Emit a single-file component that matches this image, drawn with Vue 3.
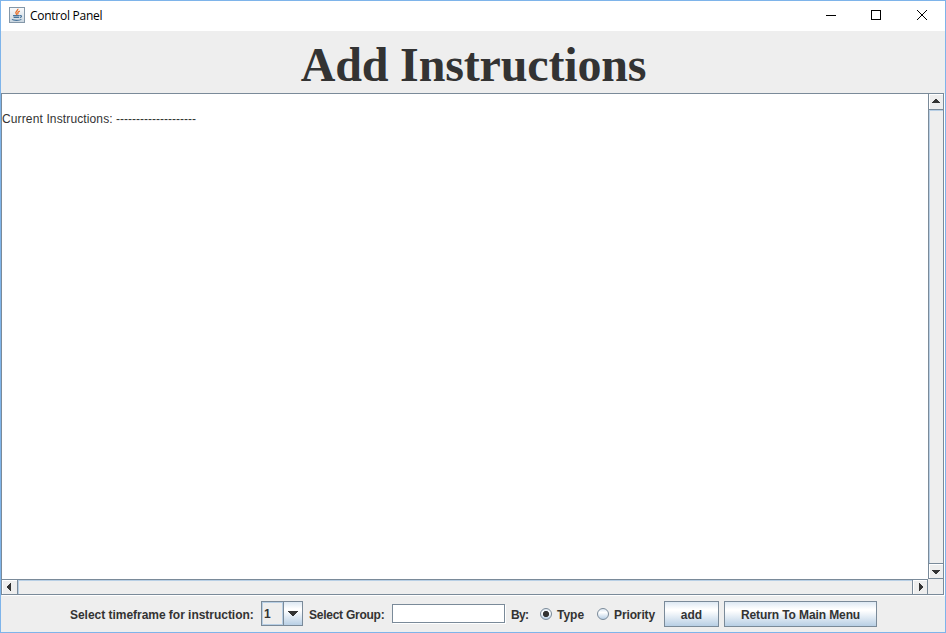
<script setup>
import { ref } from 'vue'

const timeframe = ref('1')
const group = ref('')
const mode = ref('Type')
</script>

<template>
  <div class="window">
    <header class="titlebar">
      <svg class="java" width="16" height="16" viewBox="0 0 16 16">
        <defs>
          <linearGradient id="tile" x1="0" y1="0" x2="0" y2="1">
            <stop offset="0" stop-color="#fafbfc" />
            <stop offset="1" stop-color="#c9d5df" />
          </linearGradient>
        </defs>
        <rect x=".5" y=".5" width="15" height="15" fill="url(#tile)" stroke="#8497a8" />
        <path d="M8.8 1.8C9.6 3.6 5.6 4.6 7 6.4L8 7.8M10.8 4.2C8.6 5 8.4 6 9.2 7.4" fill="none" stroke="#e8702a" stroke-width="1.3" />
        <path d="M4 8.6H10.5M4.6 10.4H10M10.8 8.6C13.4 8.2 12.8 10.2 10.8 10.6M3 12.4C4.5 13.7 10.4 13.6 12.4 12.4" fill="none" stroke="#47749b" stroke-width="1.1" />
      </svg>
      <span class="caption">Control Panel</span>
      <svg class="controls" width="102" height="12" viewBox="0 0 102 12" shape-rendering="crispEdges">
        <path d="M0 6.5H10M45.5 1.5H54.5V10.5H45.5Z" fill="none" stroke="#000" />
        <path d="M91 1L101 11M101 1L91 11" fill="none" stroke="#000" shape-rendering="auto" />
      </svg>
    </header>

    <h1 class="heading"><span>Add Instructions</span></h1>

    <main class="pane">
      <div class="viewport"><p><span class="lead">Current Instructions:</span> --------------------</p></div>
      <div class="vbar">
        <div class="arrow up"><svg width="8" height="4" shape-rendering="crispEdges"><path d="M3 0H5V1H6V2H7V3H8V4H0V3H1V2H2V1H3Z" /></svg></div>
        <div class="track"></div>
        <div class="arrow down"><svg width="8" height="4" shape-rendering="crispEdges"><path d="M0 0H8V1H7V2H6V3H5V4H3V3H2V2H1V1H0Z" /></svg></div>
      </div>
      <div class="hbar">
        <div class="arrow left"><svg width="4" height="8" shape-rendering="crispEdges"><path d="M4 0V8H3V7H2V6H1V5H0V3H1V2H2V1H3V0Z" /></svg></div>
        <div class="track"></div>
        <div class="arrow right"><svg width="4" height="8" shape-rendering="crispEdges"><path d="M0 0V8H1V7H2V6H3V5H4V3H3V2H2V1H1V0Z" /></svg></div>
      </div>
      <div class="corner"></div>
    </main>

    <footer class="form">
      <span class="label timeframe">Select timeframe for instruction:</span>
      <div class="combo">
        <span class="value">{{ timeframe }}</span>
        <span class="drop"><svg width="10" height="5" shape-rendering="crispEdges"><path d="M0 0H10V1H9V2H8V3H7V4H6V5H4V4H3V3H2V2H1V1H0Z" /></svg></span>
      </div>
      <span class="label group">Select Group:</span>
      <input v-model="group" class="field" type="text" />
      <span class="label by">By:</span>
      <label class="radio type"><input v-model="mode" type="radio" value="Type" /><span>Type</span></label>
      <label class="radio priority"><input v-model="mode" type="radio" value="Priority" /><span>Priority</span></label>
      <button class="button add">add</button>
      <button class="button back">Return To Main Menu</button>
    </footer>
  </div>
</template>

<style>
body { margin: 0; overflow: hidden; }
</style>

<style scoped>
.window {
  box-sizing: border-box;
  width: 946px;
  height: 633px;
  border: 1px solid #7eb4ea;
  background: #eee;
  display: flex;
  flex-direction: column;
  color: #333;
  font: 12px "Liberation Sans", Arial, sans-serif;
  white-space: nowrap;
}
.titlebar {
  height: 30px;
  background: #fff;
  display: flex;
  align-items: center;
  padding: 0 17px 0 8px;
  box-sizing: border-box;
}
.java { margin-top: -2px; }
.caption {
  margin: -2px 0 0 5px;
  color: #000;
  font: 12px "Open Sans", "Segoe UI", sans-serif;
  letter-spacing: -0.26px;
}
.controls { margin-left: auto; margin-top: -2px; }
.heading {
  margin: 0;
  height: 62px;
  font: bold 48px/62px "Liberation Serif", "Times New Roman", serif;
  letter-spacing: -0.15px;
  text-align: center;
}
.heading span { display: block; padding: 3px 0 0 1px; }
.pane {
  box-sizing: border-box;
  width: 943px;
  height: 502px;
  border: 1px solid #7a8a99;
  box-shadow: 1px 1px #fff;
  display: grid;
  grid-template: 485px 15px / 926px 15px;
}
.viewport { background: #fff; }
.viewport p { margin: 0; padding-top: 18px; line-height: 14px; }
.lead { letter-spacing: 0.13px; }
.vbar {
  border-left: 1px solid #7a8a99;
  display: grid;
  grid-template-rows: 16px 1fr 16px;
}
.hbar {
  border-top: 1px solid #7a8a99;
  display: grid;
  grid-template-columns: 16px 1fr 16px;
}
.arrow {
  display: flex;
  align-items: center;
  justify-content: center;
  box-sizing: border-box;
  box-shadow: inset 1px 1px #fff;
  fill: #333;
}
.up { border-bottom: 1px solid #7a8a99; padding-bottom: 1px; }
.down { border: solid #7a8a99; border-width: 1px 0; padding-top: 2px; }
.left { border-right: 1px solid #7a8a99; padding-right: 1px; }
.right { border: solid #7a8a99; border-width: 0 1px; padding-left: 2px; }
.track { box-shadow: inset 1px 1px #b8cfe5; }
.form {
  height: 36px;
  display: flex;
  align-items: flex-start;
  padding: 6px 0 0 69px;
  box-sizing: border-box;
  font-weight: bold;
}
.label { line-height: 28px; }
.timeframe { width: 191px; letter-spacing: -0.03px; }
.combo {
  box-sizing: border-box;
  width: 42px;
  height: 25px;
  border: 1px solid #7a8a99;
  display: flex;
}
.value {
  box-sizing: border-box;
  width: 21px;
  border: 1px solid #b8cfe5;
  line-height: 23px;
  padding-left: 1px;
}
.drop {
  flex: 1;
  border-left: 1px solid #7a8a99;
  display: flex;
  align-items: center;
  justify-content: center;
  fill: #333;
}
.drop, .button {
  background: linear-gradient(#dde8f3 0, #fff 30%, #fff 36%, #b8cfe5 100%);
}
.group { margin-left: 6px; width: 83px; letter-spacing: -0.25px; }
.field {
  box-sizing: border-box;
  width: 113px;
  height: 19px;
  margin: 3px 0 0;
  padding: 0 2px;
  border: 1px solid #7a8a99;
  background: #fff;
  box-shadow: 1px 1px #fff;
  outline: 0;
}
.by { margin-left: 6px; width: 29px; letter-spacing: -0.7px; }
.radio {
  display: flex;
  line-height: 28px;
}
.radio input {
  appearance: none;
  box-sizing: border-box;
  width: 12px;
  height: 12px;
  margin: 7px 5px 0 0;
  border: 1px solid #7a8a99;
  border-radius: 50%;
  background: linear-gradient(#dde8f3, #fff 35%, #b8cfe5);
}
.radio input:checked {
  background: radial-gradient(circle, #333 0 2.8px, transparent 3.3px), linear-gradient(#dde8f3, #fff 35%, #b8cfe5);
}
.type { width: 57px; }
.priority { width: 67px; letter-spacing: -0.12px; }
.button {
  box-sizing: border-box;
  height: 26px;
  border: 1px solid #7a8a99;
  border-radius: 0;
  padding: 0;
  margin: 0;
  color: #333;
  font: bold 12px/26px "Liberation Sans", Arial, sans-serif;
}
.add { width: 55px; }
.back { width: 153px; margin-left: 5px; letter-spacing: -0.1px; }
</style>
